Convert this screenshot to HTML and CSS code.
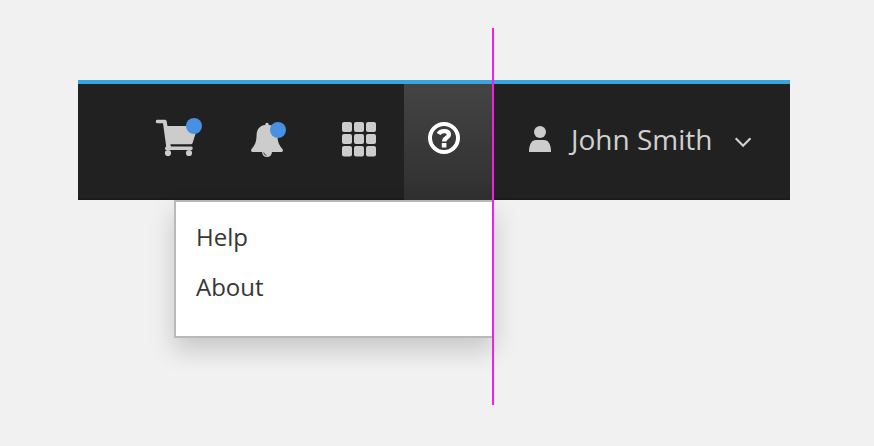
FILE: index.html
```
<!DOCTYPE html>
<html lang="en">
<head>
<meta charset="utf-8">
<title>Masthead</title>
<link rel="stylesheet" href="styles.css">
</head>
<body>
<header class="masthead">
  <nav class="tools">
    <a class="tool">
      <svg width="90" height="114" viewBox="134 84 90 114">
        <g fill="#ccc">
          <path d="M157 119.800h7.900q1.400 0 1.700 1.300l.900 4.900H198L192.600 143q-.400 1.200-1.700 1.200H170.300l.700 2.200H191.500q1.200 0 1.200 1.750T191.500 149.900H166.500q-1.500 0-1.500-1.500 0-1 1.200-1.800l-3.200-23.300H157q-1.200 0-1.200-1.750T157 119.800z"/>
          <circle cx="168" cy="153" r="3.100"/><circle cx="189" cy="153" r="3.100"/>
        </g>
        <circle cx="194" cy="126" r="8" fill="#4a90e2"/>
      </svg>
    </a>
    <a class="tool">
      <svg width="90" height="114" viewBox="224 84 90 114">
        <path fill="#ccc" d="M265.200 125Q265.200 122.700 267 122.700T268.800 125C274.500 125.500 277.200 129.500 277.400 135C277.600 142 279 145 282.300 148.800Q284 152 281.500 152H272Q271.500 157 267 157T262 152H252.500Q250 152 251.700 148.800C255 145 256.400 142 256.600 135C256.800 129.500 259.500 125.500 265.200 125Z"/>
        <path fill="none" stroke="#222" stroke-width=".8" d="M263.700 152.500Q264.200 155.200 266.600 155.400"/>
        <circle cx="278" cy="130" r="8" fill="#4a90e2"/>
      </svg>
    </a>
    <a class="tool">
      <svg width="90" height="114" viewBox="314 84 90 114">
        <g fill="#ccc">
          <rect x="342" y="122" width="10" height="10" rx="2"/><rect x="354" y="122" width="10" height="10" rx="2"/><rect x="366" y="122" width="10" height="10" rx="2"/>
          <rect x="342" y="134" width="10" height="10" rx="2"/><rect x="354" y="134" width="10" height="10" rx="2"/><rect x="366" y="134" width="10" height="10" rx="2"/>
          <rect x="342" y="146" width="10" height="10.400" rx="2"/><rect x="354" y="146" width="10" height="10.400" rx="2"/><rect x="366" y="146" width="10" height="10.400" rx="2"/>
        </g>
      </svg>
    </a>
    <div class="tool tool-active">
      <svg width="90" height="114" viewBox="404 84 90 114">
        <circle cx="444" cy="138" r="14" fill="none" stroke="#fff" stroke-width="4"/>
        <path fill="none" stroke="#fff" stroke-width="4.400" d="M438.600 134Q440.200 131.100 444.200 131.100Q448.900 131.100 448.900 134.500C448.900 138 444.200 137.600 444.200 141.400"/>
        <rect x="441.800" y="143" width="4.600" height="4.600" rx=".5" fill="#fff"/>
      </svg>
      <div class="menu">
        <a class="menu-item">Help</a>
        <a class="menu-item">About</a>
      </div>
      <i class="guide"></i>
    </div>
  </nav>
  <div class="user">
    <svg width="22" height="26" viewBox="529 126 22 26" fill="#ccc">
      <circle cx="540" cy="132" r="6"/>
      <path d="M529 152C529 144.500 531.500 140 536 140H544C548.500 140 551 144.500 551 152Z"/>
    </svg>
    <span class="user-name">John Smith</span>
    <svg class="caret" width="18" height="12" viewBox="734 136 18 12">
      <path fill="none" stroke="#d1d1d1" stroke-width="2.200" d="M735.700 138.300L743.100 145.700L750.500 138.300"/>
    </svg>
  </div>
</header>
</body>
</html>
```
FILE: styles.css
```
* { box-sizing: border-box; }
body {
  margin: 0;
  padding: 80px 84px 0 78px;
  height: 446px;
  overflow: hidden;
  background: #f1f1f1;
  font-family: "Noto Sans", "Open Sans", sans-serif;
}
.masthead {
  display: flex;
  height: 120px;
  background: #212121;
  border-top: 4px solid #39a5dc;
  border-bottom: 2px solid #1c1a1c;
}
.tools { display: flex; padding-left: 56px; }
.tool { width: 90px; height: 114px; }
.tool svg { display: block; }
.tool-active {
  position: relative;
  height: 116px;
  background: linear-gradient(#444, #303030);
}
.menu {
  position: absolute;
  top: 116px;
  right: 0;
  width: 320px;
  height: 138px;
  padding: 10px 20px;
  background: #fff;
  border: 2px solid #b9b9b9;
  box-shadow: 0 12px 24px rgba(0, 0, 0, .175);
}
.menu-item {
  display: block;
  height: 50px;
  line-height: 50px;
  font-family: "Open Sans", "Noto Sans", sans-serif;
  font-size: 24px;
  color: #363636;
}
.guide {
  position: absolute;
  top: -56px;
  right: 0;
  width: 2px;
  height: 377px;
  background: #f81ee0;
}
.user {
  display: flex;
  align-items: center;
  padding-left: 35px;
  height: 110px;
}
.user-name {
  margin-left: 20px;
  width: 142px;
  font-family: "Open Sans", "Noto Sans", sans-serif;
  font-size: 28px;
  line-height: 40px;
  white-space: nowrap;
  color: #d1d1d1;
}
.caret { margin: 6px 0 0 21px; }
```
